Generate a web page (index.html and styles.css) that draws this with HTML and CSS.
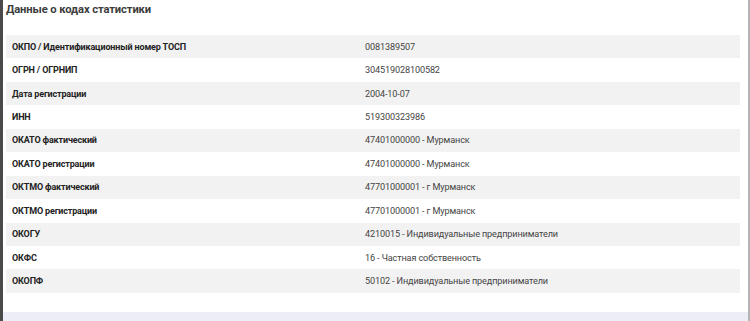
FILE: index.html
```html
<!DOCTYPE html>
<html lang="ru">
<head>
<meta charset="utf-8">
<link rel="stylesheet" href="styles.css">
</head>
<body>
<div class="frame">
  <section class="panel">
    <h2 class="title">Данные о кодах статистики</h2>
    <table class="codes">
      <colgroup><col class="col-label"><col class="col-value"></colgroup>
      <tr><th>ОКПО / Идентификационный номер ТОСП</th><td>0081389507</td></tr>
      <tr><th>ОГРН / ОГРНИП</th><td>304519028100582</td></tr>
      <tr><th>Дата регистрации</th><td>2004-10-07</td></tr>
      <tr><th>ИНН</th><td>519300323986</td></tr>
      <tr><th>ОКАТО фактический</th><td>47401000000 - Мурманск</td></tr>
      <tr><th>ОКАТО регистрации</th><td>47401000000 - Мурманск</td></tr>
      <tr><th>ОКТМО фактический</th><td>47701000001 - г Мурманск</td></tr>
      <tr><th>ОКТМО регистрации</th><td>47701000001 - г Мурманск</td></tr>
      <tr><th>ОКОГУ</th><td>4210015 - Индивидуальные предприниматели</td></tr>
      <tr><th>ОКФС</th><td>16 - Частная собственность</td></tr>
      <tr><th>ОКОПФ</th><td>50102 - Индивидуальные предприниматели</td></tr>
    </table>
  </section>
  <div class="footer-strip"></div>
</div>
</body>
</html>
```
FILE: styles.css
```css
html, body {
  margin: 0;
  padding: 0;
  background: #ffffff;
}
body {
  font-family: Roboto, "Liberation Sans", Arial, sans-serif;
  color: #333333;
  width: 750px;
  height: 321px;
  overflow: hidden;
}
.frame {
  box-sizing: border-box;
  height: 321px;
  border-left: 3px solid #4a4a4a;
  border-right: 2px solid #b4b4b4;
  display: flex;
  flex-direction: column;
}
.panel {
  flex: 1;
  padding: 0 8px 0 3px;
}
.title {
  margin: 0;
  padding-top: 2px;
  height: 33px;
  font-size: 11.2px;
  font-weight: 700;
  letter-spacing: -0.1px;
  color: #3c3c3c;
  line-height: 16px;
}
.codes {
  width: 100%;
  table-layout: fixed;
  border-collapse: collapse;
}
.col-label {
  width: 353px;
}
.codes tr {
  height: 23.45px;
}
.codes tr:nth-child(odd) {
  background: #f2f2f2;
}
.codes th {
  text-align: left;
  font-size: 9px;
  font-weight: 700;
  letter-spacing: -0.15px;
  color: #222222;
  padding: 0 0 0 6px;
}
.codes td {
  font-size: 9.1px;
  letter-spacing: -0.12px;
  color: #444444;
  padding: 0 0 0 6px;
}
.footer-strip {
  height: 9px;
  background: #ededf7;
}
```
